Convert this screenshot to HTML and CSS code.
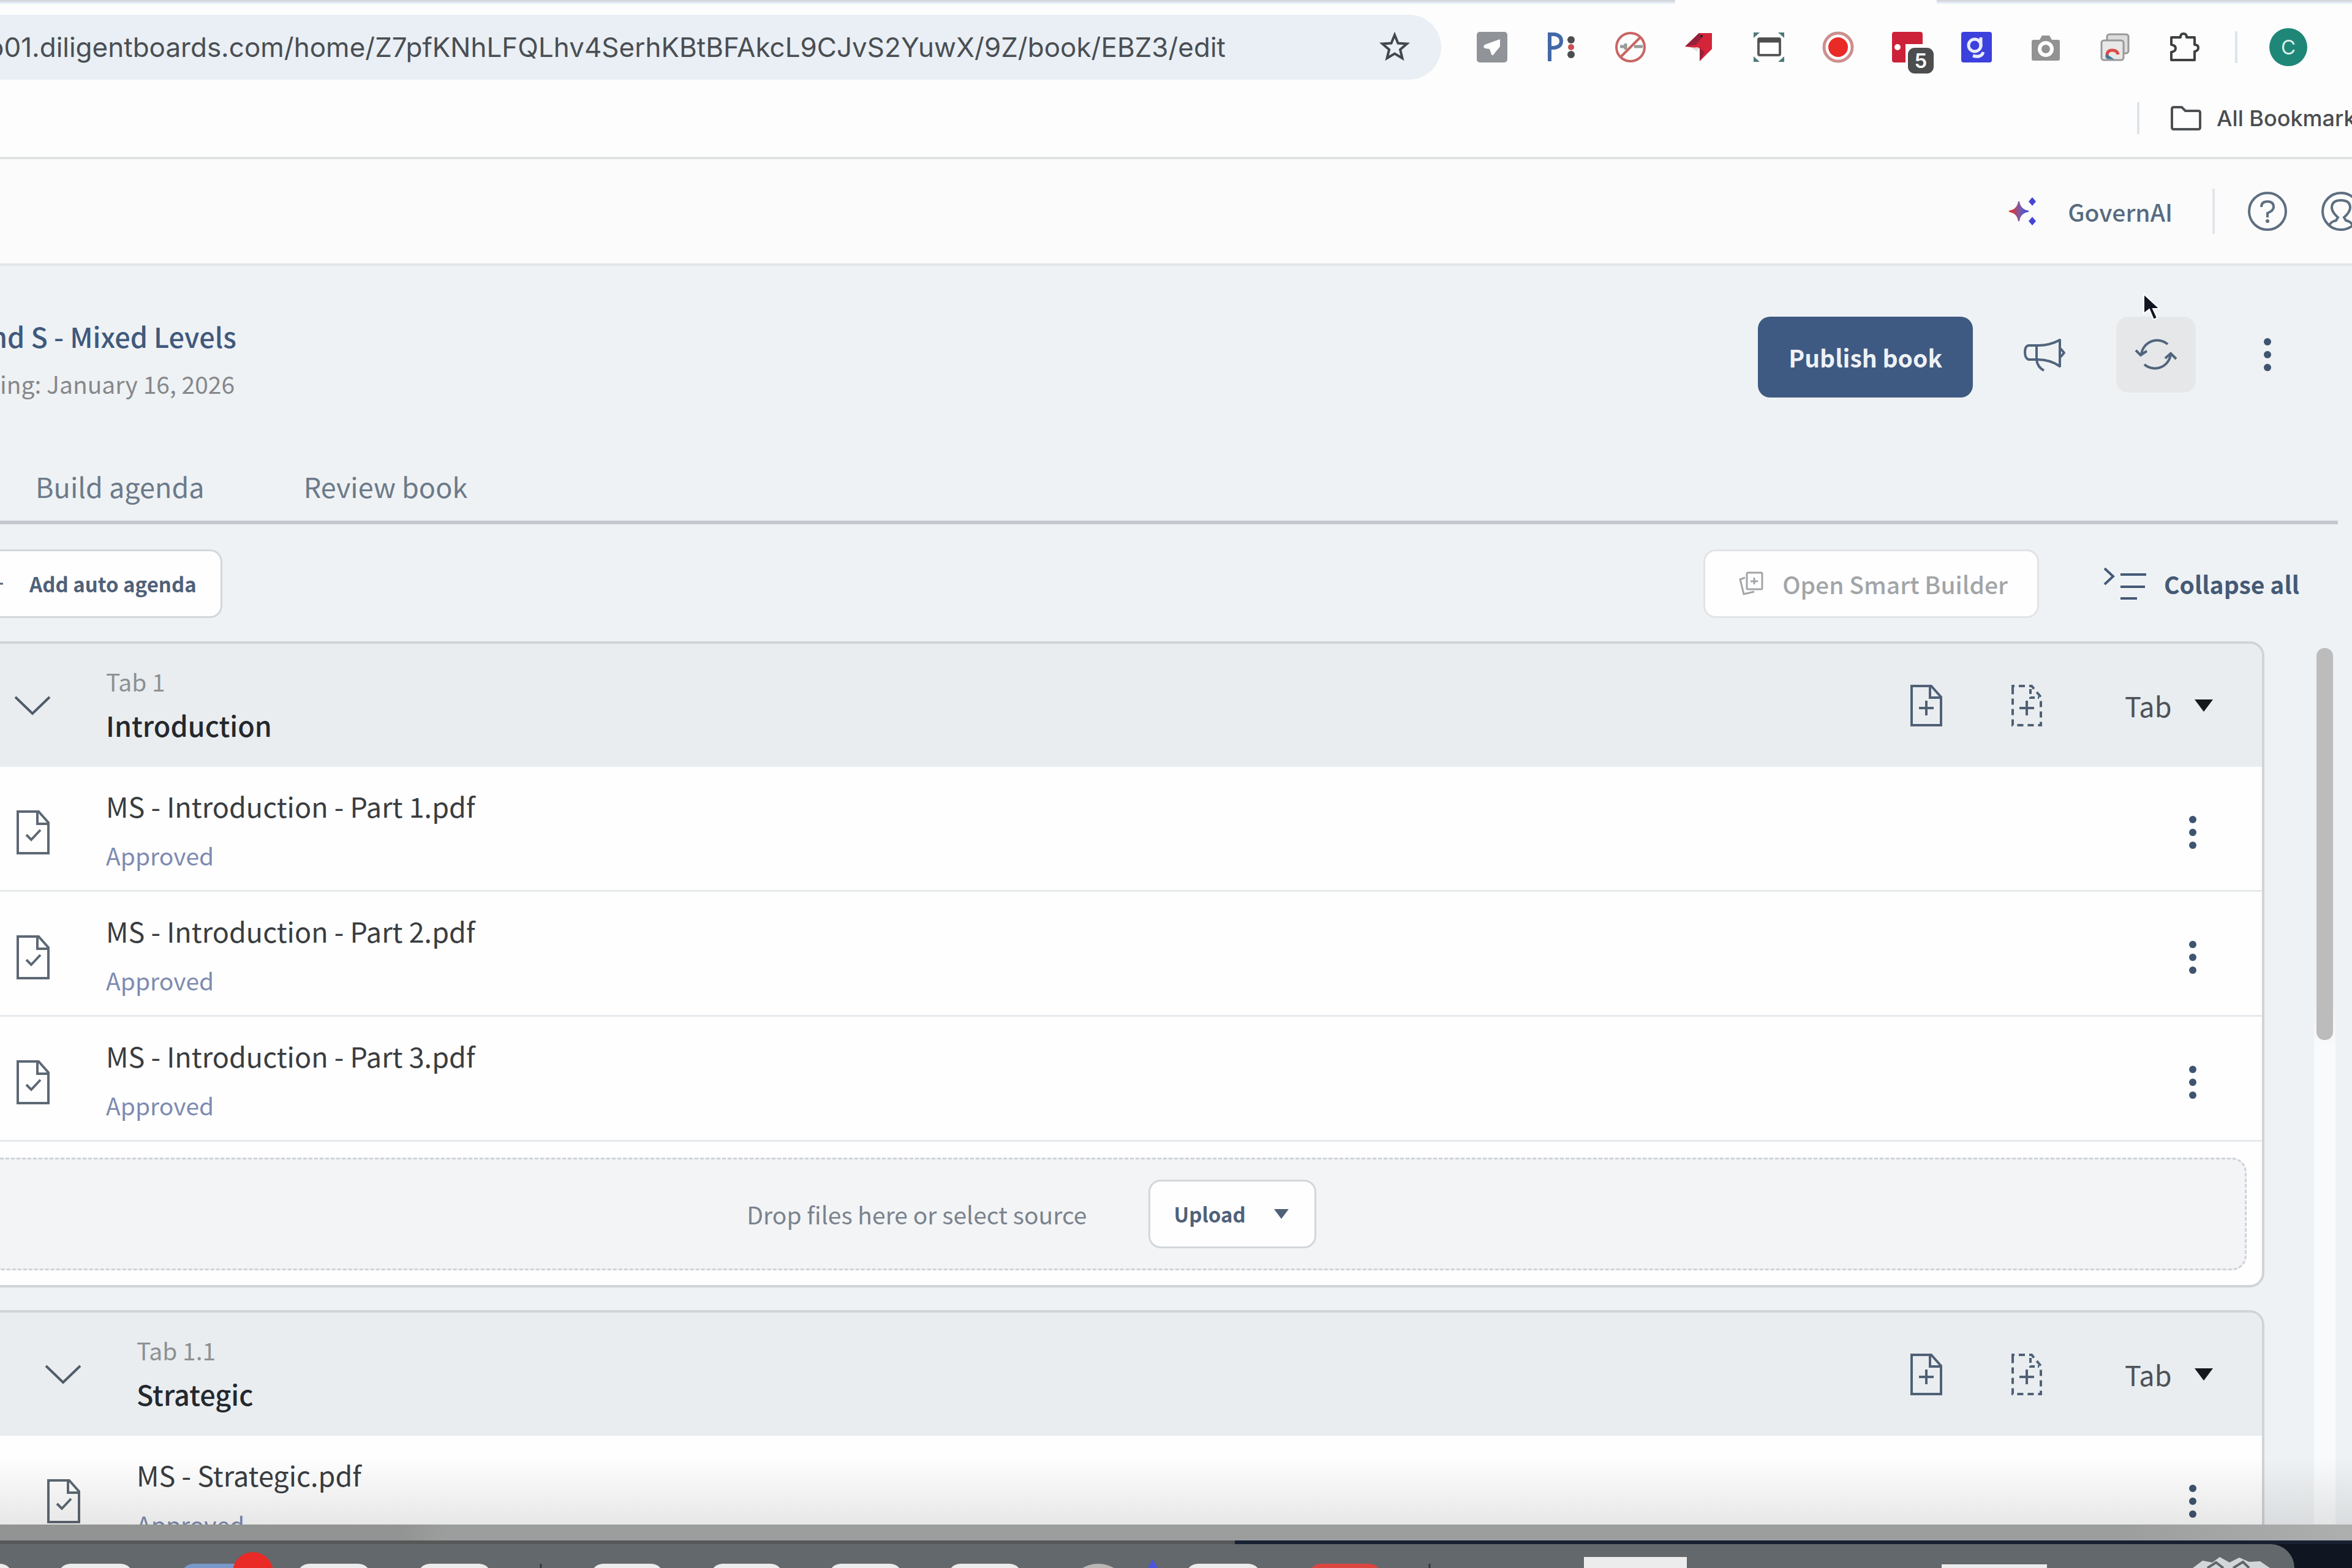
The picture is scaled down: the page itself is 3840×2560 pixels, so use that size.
FILE: index.html
```html
<!DOCTYPE html>
<html lang="en">
<head>
<meta charset="utf-8">
<title>Mixed Levels - Edit book</title>
<meta name="viewport" content="width=device-width, initial-scale=1">
<link rel="stylesheet" href="styles.css">
</head>
<body>
<svg class="defs" aria-hidden="true">
  <defs>
    <linearGradient id="spark" x1="0" y1="0" x2="1" y2="0"><stop offset="0.1" stop-color="#e0342f"/><stop offset="0.55" stop-color="#7a5aa8"/><stop offset="1" stop-color="#3f4fe0"/></linearGradient>
    <symbol id="file-check" viewBox="0 0 54 72"><g fill="none" stroke="#5d6874" stroke-width="4"><path d="M2 2H36L52 20V70H2Z"/><path d="M34 3V22H51"/><path d="M16 40L24 48L39 32"/></g></symbol>
    <symbol id="file-plus" viewBox="0 0 52 68"><g fill="none" stroke="#4f6076" stroke-width="4"><path d="M2 2H34L50 20V66H2Z"/><path d="M32 3V21H49"/><path d="M26 26V50M14 38H38"/></g></symbol>
    <symbol id="file-dashed" viewBox="0 0 52 68"><g fill="none" stroke="#4f6076" stroke-width="4"><path stroke-dasharray="10 7" d="M3 9V2H34L49 20V66H3V9"/><path stroke-dasharray="8 5" d="M32 7V21H46"/><path d="M26 26V50M14 38H38"/></g></symbol>
    <symbol id="chevron" viewBox="0 0 60 34"><path d="M2 3L30 30L58 3" fill="none" stroke="#4f5c69" stroke-width="4"/></symbol>
    <symbol id="dots" viewBox="0 0 14 56"><g fill="#3f5470"><circle cx="7" cy="7" r="6"/><circle cx="7" cy="28" r="6"/><circle cx="7" cy="49" r="6"/></g></symbol>
    <symbol id="caret" viewBox="0 0 30 20"><path d="M0 0H30L15 20Z" fill="currentColor"/></symbol>
  </defs>
</svg>

<div class="window">
  <div class="tabstrip"><span class="inactive-tabs left"></span><span class="active-tab"></span><span class="inactive-tabs right"></span></div>

  <header class="browser">
    <div class="toolbar">
      <form class="address">
        <input class="url" type="text" aria-label="Address" value="o01.diligentboards.com/home/Z7pfKNhLFQLhv4SerhKBtBFAkcL9CJvS2YuwX/9Z/book/EBZ3/edit">
        <button type="button" class="plain" aria-label="Bookmark this page"><svg width="50" height="50" viewBox="0 0 50 50"><path d="M25 5L30.500 18.500L45 19.500L34 29L37.500 43L25 35.500L12.500 43L16 29L5 19.500L19.500 18.500Z" fill="none" stroke="#42474c" stroke-width="4"/></svg></button>
      </form>
      <div class="extensions">
        <button type="button" class="plain" aria-label="Navigator"><svg width="52" height="52" viewBox="0 0 52 52"><rect x="1" y="1" width="50" height="50" rx="5" fill="#909498"/><path d="M39 13L14 22Q10 26 15 28L22 29L25 38Q28 41 30 36L39 25Z" fill="#fff"/></svg></button>
        <button type="button" class="plain" aria-label="P extension"><svg width="52" height="52" viewBox="0 0 52 52"><path d="M7 49V5H15Q26 7 26 16T15 27H8" fill="none" stroke="#4368a5" stroke-width="6"/><circle cx="42" cy="14" r="6" fill="#4b4d50"/><circle cx="42" cy="26" r="5" fill="#c9504f"/><circle cx="42" cy="38" r="6" fill="#4b4d50"/></svg></button>
        <button type="button" class="plain" aria-label="Blocker"><svg width="52" height="52" viewBox="0 0 52 52"><path d="M9 25H20M32 25H46M18 20V30" stroke="#9a9a9a" stroke-width="5"/><circle cx="26" cy="26" r="23" fill="none" stroke="#c96563" stroke-width="4"/><path d="M10 42L42 10" stroke="#c96563" stroke-width="4"/></svg></button>
        <button type="button" class="plain" aria-label="Red bird"><svg width="52" height="52" viewBox="0 0 52 52"><path d="M25 3H46V29L26 49V28L2 25Z" fill="#d3243a"/><path d="M25 3L2 25L20 22L30 10ZM26 28L34 34L26 49Z" fill="#96203a"/><path d="M12 27L24 26L22 33Z" fill="#ddd"/><circle cx="29" cy="8" r="2" fill="#222"/></svg></button>
        <button type="button" class="plain" aria-label="Resize window"><svg width="52" height="52" viewBox="0 0 52 52"><path d="M1 2H11L1 11ZM51 2H41L51 11ZM1 50H11L1 41ZM51 50H41L51 41Z" fill="#4d7a78"/><rect x="9" y="12" width="35" height="27" rx="2" fill="#fff" stroke="#58595b" stroke-width="4"/><path d="M8 15H45" stroke="#4e4e50" stroke-width="7"/></svg></button>
        <button type="button" class="plain" aria-label="Record"><svg width="52" height="52" viewBox="0 0 52 52"><circle cx="26" cy="26" r="23" fill="#fff" stroke="#cd8f8f" stroke-width="5"/><circle cx="26" cy="26" r="16" fill="#ea2a27"/></svg></button>
        <button type="button" class="plain badged" aria-label="Passwords, 5 items"><svg width="52" height="52" viewBox="0 0 52 52"><path d="M5 1H47Q51 1 51 5V21H23V51H5Q1 51 1 47V5Q1 1 5 1Z" fill="#cc2138"/><circle cx="10" cy="26" r="5" fill="#fff"/></svg><span class="count">5</span></button>
        <button type="button" class="plain" aria-label="g extension"><svg width="52" height="52" viewBox="0 0 52 52"><rect x="1" y="1" width="50" height="50" rx="4" fill="#3c40dc"/><g fill="none" stroke="#e9ebfb" stroke-width="5"><circle cx="23" cy="23" r="10"/><path d="M33 10V26M20 40Q34 44 37 34"/></g></svg></button>
        <button type="button" class="plain" aria-label="Camera"><svg width="52" height="52" viewBox="0 0 52 52"><path d="M6 14H16L20 7H32L36 14H46Q49 14 49 17V45Q49 48 46 48H6Q3 48 3 45V17Q3 14 6 14Z" fill="#929292"/><circle cx="26" cy="29" r="10" fill="#929292" stroke="#fff" stroke-width="6"/></svg></button>
        <button type="button" class="plain" aria-label="Screenshots"><svg width="52" height="52" viewBox="0 0 52 52"><rect x="13" y="5" width="35" height="31" rx="4" fill="#ddd" stroke="#9a9a9a" stroke-width="3"/><rect x="4" y="15" width="36" height="32" rx="4" fill="#e8e8e8" stroke="#9a9a9a" stroke-width="3"/><path d="M13 43Q12 31 21 31T31 38" fill="none" stroke="#dc4c47" stroke-width="5"/><path d="M12 45V37L25 46Z" fill="#347c9e"/></svg></button>
        <button type="button" class="plain" aria-label="Extensions"><svg width="52" height="52" viewBox="0 0 52 52"><path d="M5 10H20Q20 4 25 4T30 10H43V22Q49 22 49 27T43 33V47H5V34Q12 33 12 28T5 22Z" fill="none" stroke="#3e4042" stroke-width="4" stroke-linejoin="round"/></svg></button>
      </div>
      <span class="rule"></span>
      <button type="button" class="avatar" aria-label="Profile">C</button>
    </div>
    <div class="bookmarks">
      <span class="rule"></span>
      <button type="button" class="bookmark-folder"><svg width="52" height="42" viewBox="0 0 52 42"><path d="M3 6Q3 3 6 3H19L25 9H46Q49 9 49 12V36Q49 39 46 39H6Q3 39 3 36Z" fill="none" stroke="#4d5053" stroke-width="4"/></svg>All&nbsp;Bookmarks</button>
    </div>
  </header>

  <div class="app-bar">
    <button type="button" class="governai"><svg width="48" height="48" viewBox="0 0 48 48"><path d="M18 8Q20 22 34 24Q20 26 18 40Q16 26 2 24Q16 22 18 8Z" fill="url(#spark)" stroke="url(#spark)" stroke-width="2"/><path d="M40 1L46 8L40 15L34 8ZM40 33L46 40L40 47L34 40Z" fill="#4444d8"/></svg>GovernAI</button>
    <span class="rule tall"></span>
    <button type="button" class="plain" aria-label="Help"><svg width="66" height="66" viewBox="0 0 66 66"><g fill="none" stroke="#5d6e80" stroke-width="4"><circle cx="33" cy="33" r="30"/><path d="M23 26Q23 17 33 17T43 26Q43 32 33 36V43"/></g><circle cx="33" cy="49" r="3" fill="#5d6e80"/></svg></button>
    <button type="button" class="plain account" aria-label="Account"><svg width="66" height="66" viewBox="0 0 66 66"><g fill="none" stroke="#5d6e80" stroke-width="4"><circle cx="33" cy="33" r="30"/><path d="M14 56Q16 50 25 48L28 43Q18 34 18 27Q18 15 33 15T48 27Q48 34 38 43L41 48Q50 50 52 56"/></g></svg></button>
  </div>

  <main class="page">
    <section class="book-header">
      <div class="book-title">
        <h1>nd S - Mixed Levels</h1>
        <p>ing: January 16, 2026</p>
      </div>
      <div class="book-actions">
        <button type="button" class="publish">Publish book</button>
        <button type="button" class="tool" aria-label="Announce"><svg width="70" height="60" viewBox="0 0 70 60"><g fill="none" stroke="#50647c" stroke-width="4" stroke-linejoin="round"><path d="M9 15H24Q44 15 60 6V49Q44 38 24 38H9Q3 36 3 26T9 15Z"/><path d="M22 15V38Q23 50 34 56"/><path d="M61 20L67 27L61 34"/></g></svg></button>
        <button type="button" class="tool hovered" aria-label="Refresh"><svg width="70" height="60" viewBox="0 0 70 60"><g fill="none" stroke="#50647c" stroke-width="4"><path d="M54 13A26 26 0 0 0 11 30M16 46A26 26 0 0 0 59 29"/><path d="M2 23L10 31L20 24M50 36L59 28L68 37"/></g></svg></button>
        <button type="button" class="tool" aria-label="More options"><svg width="14" height="56"><use href="#dots"/></svg></button>
        <svg class="pointer" width="36" height="56" viewBox="0 0 36 56"><path d="M4 3V35L13 28L20 45L26 42L19 27H30Z" fill="#10161f" stroke="#fff" stroke-width="2"/></svg>
      </div>
    </section>

    <nav class="tabs">
      <a href="#build">Build agenda</a>
      <a href="#review">Review book</a>
    </nav>

    <div class="agenda-tools">
      <button type="button" class="outlined auto"><svg width="24" height="24" viewBox="0 0 24 24"><path d="M12 2V22M2 12H22" stroke="#53657c" stroke-width="3"/></svg>Add auto agenda</button>
      <button type="button" class="outlined smart" disabled><svg width="42" height="42" viewBox="0 0 42 42"><g fill="none" stroke="#a2a5a8" stroke-width="3"><rect x="14" y="3" width="25" height="27" rx="2"/><path d="M26 11V22M20 17H32M11 11L3 14L9 38L26 34"/></g></svg>Open Smart Builder</button>
      <button type="button" class="collapse"><svg width="72" height="56" viewBox="0 0 72 56"><g fill="none" stroke="#445a76" stroke-width="4"><path d="M3 3L17 16L3 29"/><path d="M29 13H71M29 33H69M29 52H56"/></g></svg>Collapse all</button>
    </div>

    <div class="agenda">
      <div class="agenda-list">
        <section class="card">
          <header class="card-head">
            <button type="button" class="plain toggle" aria-label="Collapse Introduction"><svg width="60" height="34"><use href="#chevron"/></svg></button>
            <div class="label"><span class="number">Tab 1</span><h2>Introduction</h2></div>
            <button type="button" class="plain" aria-label="Add file"><svg width="52" height="68"><use href="#file-plus"/></svg></button>
            <button type="button" class="plain" aria-label="Add placeholder"><svg width="52" height="68"><use href="#file-dashed"/></svg></button>
            <span class="level"><select aria-label="Level of Introduction"><option>Tab</option></select><svg width="30" height="20"><use href="#caret"/></svg></span>
          </header>
          <article class="file">
            <svg width="54" height="72"><use href="#file-check"/></svg>
            <div class="label"><h3>MS - Introduction - Part 1.pdf</h3><span class="status">Approved</span></div>
            <button type="button" class="plain kebab" aria-label="Part 1 options"><svg width="14" height="56"><use href="#dots"/></svg></button>
          </article>
          <article class="file">
            <svg width="54" height="72"><use href="#file-check"/></svg>
            <div class="label"><h3>MS - Introduction - Part 2.pdf</h3><span class="status">Approved</span></div>
            <button type="button" class="plain kebab" aria-label="Part 2 options"><svg width="14" height="56"><use href="#dots"/></svg></button>
          </article>
          <article class="file">
            <svg width="54" height="72"><use href="#file-check"/></svg>
            <div class="label"><h3>MS - Introduction - Part 3.pdf</h3><span class="status">Approved</span></div>
            <button type="button" class="plain kebab" aria-label="Part 3 options"><svg width="14" height="56"><use href="#dots"/></svg></button>
          </article>
          <div class="dropzone">
            <p>Drop files here or select source</p>
            <button type="button" class="outlined upload">Upload<svg width="24" height="16"><use href="#caret"/></svg></button>
          </div>
        </section>

        <section class="card nested">
          <header class="card-head">
            <button type="button" class="plain toggle" aria-label="Collapse Strategic"><svg width="60" height="34"><use href="#chevron"/></svg></button>
            <div class="label"><span class="number">Tab 1.1</span><h2>Strategic</h2></div>
            <button type="button" class="plain" aria-label="Add file"><svg width="52" height="68"><use href="#file-plus"/></svg></button>
            <button type="button" class="plain" aria-label="Add placeholder"><svg width="52" height="68"><use href="#file-dashed"/></svg></button>
            <span class="level"><select aria-label="Level of Strategic"><option>Tab</option></select><svg width="30" height="20"><use href="#caret"/></svg></span>
          </header>
          <article class="file">
            <svg width="54" height="72"><use href="#file-check"/></svg>
            <div class="label"><h3>MS - Strategic.pdf</h3><span class="status">Approved</span></div>
            <button type="button" class="plain kebab" aria-label="Strategic options"><svg width="14" height="56"><use href="#dots"/></svg></button>
          </article>
        </section>
      </div>
      <div class="scroll-track"><div class="scroll-thumb"></div></div>
    </div>
  </main>
  <div class="window-shade"></div>
</div>

<footer class="desktop">
  <div class="backdrop"></div>
  <div class="backline"></div>
  <div class="dock">
    <svg class="dock-icons" width="3746" height="39" viewBox="0 0 3746 39">
      <g fill="#ececec">
        <rect x="-100" y="32" width="120" height="60" rx="20"/>
        <rect x="95" y="32" width="122" height="60" rx="20"/>
        <rect x="485" y="32" width="120" height="60" rx="20"/>
        <rect x="682" y="32" width="120" height="60" rx="20"/>
        <rect x="965" y="32" width="118" height="60" rx="20"/>
        <rect x="1160" y="32" width="118" height="60" rx="20"/>
        <rect x="1353" y="32" width="120" height="60" rx="20"/>
        <rect x="1548" y="32" width="120" height="60" rx="20"/>
        <rect x="1936" y="32" width="122" height="60" rx="20"/>
        <rect x="2586" y="21" width="168" height="60"/>
        <rect x="3170" y="33" width="172" height="60"/>
      </g>
      <rect x="296" y="32" width="130" height="60" rx="20" fill="#7798c8"/>
      <circle cx="413" cy="46" r="33" fill="#ea2a27"/>
      <circle cx="1793" cy="83" r="51" fill="#b9b5b5"/>
      <path d="M1874 39L1882 25L1890 39Z" fill="#4a55dd"/>
      <rect x="2137" y="32" width="118" height="60" rx="20" fill="#dd4541"/>
      <path d="M883 32V39M2334 32V39" stroke="#33383c" stroke-width="3"/>
      <path d="M3580 39L3596 27L3612 30L3624 21L3640 30L3656 22L3672 29L3690 28L3706 39Z" fill="#d3d6d8"/>
      <path d="M3604 39L3618 30L3630 39M3646 39L3662 29L3672 39" fill="none" stroke="#5e6468" stroke-width="4"/>
    </svg>
  </div>
</footer>
</body>
</html>
```

FILE: styles.css
```css
* { box-sizing: border-box; }

html, body { height: 100%; margin: 0; }

body {
  display: flex;
  flex-direction: column;
  overflow: hidden;
  background: #0f1622;
  color: #3a3d40;
  font-family: "Noto Sans CJK SC", "Noto Sans", sans-serif;
  font-size: 45px;
  line-height: 60px;
}

h1, h2, h3, p { margin: 0; font-size: inherit; font-weight: 400; }

svg { display: block; flex: none; }
.defs { position: absolute; width: 0; height: 0; }

button, input, select { margin: 0; padding: 0; border: 0; background: none; color: inherit; font: inherit; }
.plain { display: grid; place-items: center; }

.window { position: relative; flex: 1; min-height: 0; display: flex; flex-direction: column; overflow: hidden; background: #eff2f4; }

/* Browser chrome */
.tabstrip { display: flex; height: 6px; flex: none; background: #fdfdfd; }
.inactive-tabs { background: #d6d8db; border-bottom: 3px solid #e3edf8; }
.inactive-tabs.left { flex: 2735; }
.active-tab { flex: 427; }
.inactive-tabs.right { flex: 678; }

.browser { flex: none; background: #fdfdfd; border-bottom: 4px solid #e0e2e4; font-family: Inter, "Liberation Sans", sans-serif; }
.toolbar { display: flex; align-items: center; padding: 18px 73px 0 0; }
.address { flex: 1; display: flex; align-items: center; height: 106px; margin-right: 57px; padding-right: 51px; border-radius: 0 53px 53px 0; background: #e9eff4; }
.url { flex: 1; min-width: 0; margin-left: -20px; color: #4a4e53; font-size: 44px; line-height: 60px; }
.extensions { display: flex; gap: 61px; }
.rule { width: 4px; height: 52px; background: #dde4ea; }
.toolbar .rule { margin: 0 52px 0 57px; }
.avatar { width: 62px; height: 62px; border-radius: 50%; background: #1e8777; color: #dcefe9; font-size: 33px; line-height: 62px; }
.badged { position: relative; }
.count { position: absolute; left: 27px; top: 27px; width: 42px; height: 42px; border-radius: 11px; background: #4b4d4e; color: #fff; font-size: 33px; font-weight: 600; line-height: 42px; text-align: center; }

.bookmarks { display: flex; align-items: center; justify-content: flex-end; height: 126px; gap: 50px; overflow: hidden; }
.bookmark-folder { display: flex; align-items: center; gap: 24px; margin-right: -26px; color: #4a4d50; font-size: 36px; font-weight: 500; }

/* Application bar */
.app-bar { flex: none; display: flex; align-items: center; justify-content: flex-end; height: 174px; overflow: hidden; background: #fafbfa; border-bottom: 4px solid #e3e5e6; }
.governai { display: flex; align-items: center; gap: 50px; color: #586b80; font-size: 39px; font-weight: 500; }
.rule.tall { height: 74px; margin: 0 53px 0 65px; background: #e2e5e9; }
.account { margin: 0 -15px 0 54px; }

/* Book header */
.page { flex: 1; min-height: 0; display: flex; flex-direction: column; }
.book-header { flex: none; display: flex; justify-content: space-between; padding: 83px 73px 0 0; }
.book-title { margin-left: -16px; padding-top: 2px; }
.book-title h1 { color: #40597d; font-weight: 500; }
.book-title p { margin: 23px 0 0 16px; color: #85888c; font-size: 39px; line-height: 48px; }
.book-actions { position: relative; display: flex; gap: 52px; align-items: flex-start; }
.publish { height: 132px; padding: 0 50px; border-radius: 20px; background: #3f5a82; color: #eef2f6; font-size: 39px; font-weight: 700; }
.tool { display: grid; place-items: center; width: 130px; height: 124px; border-radius: 20px; }
.hovered { background: #e5e7e9; }
.pointer { position: absolute; right: 235px; top: -40px; }

.tabs { flex: none; display: flex; gap: 162px; margin-right: 23px; padding: 114px 0 26px 58px; border-bottom: 6px solid #c4c8d0; color: #6c7a8a; }
.tabs a { color: inherit; text-decoration: none; }

.agenda-tools { flex: none; display: flex; align-items: center; padding: 41px 86px 38px 0; }
.outlined { display: flex; align-items: center; height: 112px; border: 3px solid #d3d6da; border-radius: 20px; background: #fefefe; color: #4f6178; font-size: 33px; font-weight: 700; }
.auto { gap: 41px; margin-left: -17px; padding: 0 39px 0 0; border-left: 0; border-radius: 0 20px 20px 0; }
.smart { gap: 30px; margin-left: auto; padding: 0 48px 0 54px; border-color: #e1e3e6; color: #a2a5a8; font-size: 39px; font-weight: 500; }
.collapse { display: flex; align-items: center; gap: 28px; margin-left: 104px; color: #445a76; font-size: 39px; font-weight: 700; }

/* Agenda */
.agenda { flex: 1; min-height: 0; display: flex; gap: 81px; padding-right: 27px; overflow: hidden; }
.agenda-list { flex: 1; min-width: 0; }
.card { margin-bottom: 37px; border: 4px solid #d0d3d7; border-left: 0; border-radius: 0 24px 24px 0; background: #fefefe; overflow: hidden; }
.card-head { display: flex; align-items: center; height: 201px; padding: 0 80px 0 23px; background: #e9edf0; }
.label { flex: 1; min-width: 0; }
.card-head .label { margin-left: 90px; padding-bottom: 2px; }
.number { display: block; color: #8e9092; font-size: 39px; line-height: 48px; }
h2 { margin-top: 18px; color: #24282d; font-weight: 500; line-height: 60px; }
.level { display: grid; align-items: center; margin-left: 134px; color: #15191e; }
.card-head .plain + .plain { margin-left: 112px; }
.level select, .level svg { grid-area: 1 / 1; }
.level select { appearance: none; width: 144px; color: #4e5257; }
.level svg { justify-self: end; pointer-events: none; }

.file { display: flex; align-items: flex-start; height: 204px; padding: 34px 83px 0 27px; border-bottom: 3px solid #e6eaed; }
.file > svg { margin-top: 37px; }
.file .label { margin-left: 92px; }
.status { display: block; margin-top: 26px; color: #7e8bb1; font-size: 39px; line-height: 48px; }
.kebab { width: 60px; height: 56px; margin-top: 45px; }

.nested .card-head { padding-left: 73px; }
.nested .file { padding-left: 77px; }

.dropzone { display: flex; align-items: center; justify-content: center; gap: 101px; height: 184px; margin: 26px 25px 24px 0; padding-right: 297px; border: 3px dashed #cfd3d8; border-left: 0; border-radius: 0 24px 24px 0; background: #f3f4f6; color: #7a838d; font-size: 39px; }
.upload { gap: 46px; padding: 0 42px 0 38px; }

.scroll-track { width: 35px; padding: 11px 4px 0; background: linear-gradient(to bottom, transparent 600px, #f9fafb 660px); }
.scroll-thumb { height: 640px; border-radius: 13px; background: #bcbcbd; }

.window-shade { position: absolute; left: 0; right: 0; bottom: 0; height: 110px; background: linear-gradient(to bottom, rgba(0, 0, 0, 0), rgba(0, 0, 0, 0.09)); pointer-events: none; }

/* Desktop below the window */
.desktop { flex: none; }
.backdrop { height: 26px; background: linear-gradient(to right, #929393 17%, #9c9e9e 19%, #9c9e9e 90%, #adafaf); }
.backline { height: 6px; background: linear-gradient(to right, #575859 2016px, #182131 2016px); }
.dock { height: 39px; margin-right: 94px; border-radius: 0 60px 0 0; background: #63686c; overflow: hidden; }
```
